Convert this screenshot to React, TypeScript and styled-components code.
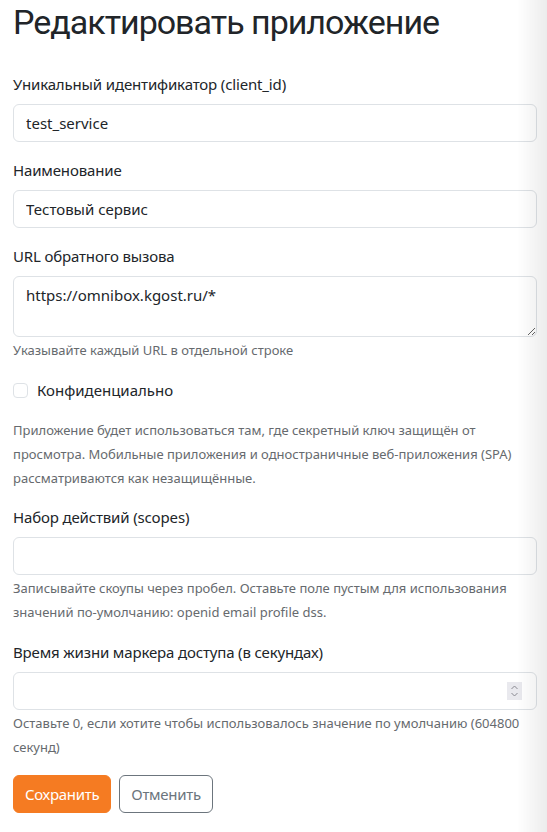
import styled, { createGlobalStyle } from 'styled-components';

const GlobalStyle = createGlobalStyle`
  html, body {
    margin: 0;
    padding: 0;
    background: #ffffff;
  }
  body {
    font-family: 'Noto Sans', 'Open Sans', sans-serif;
    color: #212529;
  }
  body::after {
    content: '';
    position: fixed;
    top: 0;
    right: 0;
    width: 30px;
    height: 100%;
    background: linear-gradient(to right, rgba(0, 0, 0, 0), rgba(0, 0, 0, 0.075));
    pointer-events: none;
  }
`;

const Page = styled.main`
  padding: 1px 10px 19px 13px;
  box-sizing: border-box;
  width: 547px;
`;

const Title = styled.h1`
  margin: 0 0 28px;
  font-family: Roboto, 'Noto Sans', sans-serif;
  font-size: 34px;
  font-weight: 400;
  letter-spacing: -1px;
  line-height: 43px;
  color: #212529;
`;

const Form = styled.form`
  display: flex;
  flex-direction: column;
`;

const Group = styled.div`
  display: flex;
  flex-direction: column;
  margin-bottom: 16px;
`;

const Label = styled.label`
  font-size: 15px;
  letter-spacing: -0.15px;
  line-height: 24px;
  margin-bottom: 8px;
  color: #212529;
`;

const fieldBase = `
  box-sizing: border-box;
  width: 100%;
  border: 1px solid #dee2e6;
  border-radius: 6px;
  background: #fff;
  font-family: 'Noto Sans', 'Open Sans', sans-serif;
  font-size: 15px;
  color: #212529;
  padding: 6px 12px;
  outline: none;
`;

const Input = styled.input`
  ${fieldBase}
  height: 38px;
  line-height: 24px;
  &::-webkit-inner-spin-button,
  &::-webkit-outer-spin-button {
    -webkit-appearance: none;
    margin: 0;
  }
`;

const TextArea = styled.textarea`
  ${fieldBase}
  height: 61px;
  line-height: 24px;
  resize: vertical;
  display: block;
`;

const Help = styled.div`
  font-size: 13px;
  line-height: 24px;
  color: #666a6e;
  margin-top: 1px;
`;

const CheckRow = styled.label`
  display: flex;
  align-items: center;
  gap: 9px;
  font-size: 15px;
  line-height: 24px;
  margin-bottom: 16px;
`;

const Check = styled.input`
  appearance: none;
  margin: 0;
  width: 15px;
  height: 15px;
  border: 1px solid #dee2e6;
  border-radius: 4px;
  background: #fff;
`;

const Note = styled.p`
  margin: 0 0 15px;
  font-size: 13px;
  line-height: 24px;
  color: #666a6e;
`;

const SpinWrap = styled.div`
  position: relative;
`;

const Spinner = styled.span`
  position: absolute;
  right: 15px;
  top: 10px;
  width: 15px;
  height: 18px;
  background: #e9e9ee;
  display: flex;
  align-items: center;
  justify-content: center;
`;

const Actions = styled.div`
  display: flex;
  gap: 8px;
`;

const Button = styled.button<{ $primary?: boolean }>`
  height: 38px;
  padding: 0 11px;
  border-radius: 6px;
  font-family: 'Noto Sans', 'Open Sans', sans-serif;
  font-size: 15px;
  letter-spacing: -0.3px;
  border: 1px solid ${({ $primary }) => ($primary ? '#f57b22' : '#6c757d')};
  background: ${({ $primary }) => ($primary ? '#f57b22' : '#fff')};
  color: ${({ $primary }) => ($primary ? '#fff' : '#6c757d')};
`;

export default function App() {
  return (
    <Page>
      <GlobalStyle />
      <Title>Редактировать приложение</Title>
      <Form onSubmit={(e) => e.preventDefault()}>
        <Group>
          <Label>Уникальный идентификатор (client_id)</Label>
          <Input defaultValue='test_service' />
        </Group>
        <Group>
          <Label>Наименование</Label>
          <Input defaultValue='Тестовый сервис' />
        </Group>
        <Group>
          <Label>URL обратного вызова</Label>
          <TextArea defaultValue='https://omnibox.kgost.ru/*' />
          <Help>Указывайте каждый URL в отдельной строке</Help>
        </Group>
        <CheckRow>
          <Check type='checkbox' />
          Конфиденциально
        </CheckRow>
        <Note>
          Приложение будет использоваться там, где секретный ключ защищён от
          просмотра. Мобильные приложения и одностраничные веб-приложения (SPA)
          рассматриваются как незащищённые.
        </Note>
        <Group>
          <Label>Набор действий (scopes)</Label>
          <Input />
          <Help>
            Записывайте скоупы через пробел. Оставьте поле пустым для
            использования значений по-умолчанию: openid email profile dss.
          </Help>
        </Group>
        <Group>
          <Label>Время жизни маркера доступа (в секундах)</Label>
          <SpinWrap>
            <Input type='number' />
            <Spinner>
              <svg width='9' height='14' viewBox='0 0 9 14' fill='none'>
                <path d='M1.5 5L4.5 2L7.5 5' stroke='#8a8a92' strokeWidth='1' />
                <path d='M1.5 9L4.5 12L7.5 9' stroke='#8a8a92' strokeWidth='1' />
              </svg>
            </Spinner>
          </SpinWrap>
          <Help>
            Оставьте 0, если хотите чтобы использовалось значение по умолчанию
            (604800 секунд)
          </Help>
        </Group>
        <Actions>
          <Button $primary type='submit'>Сохранить</Button>
          <Button type='button'>Отменить</Button>
        </Actions>
      </Form>
    </Page>
  );
}
